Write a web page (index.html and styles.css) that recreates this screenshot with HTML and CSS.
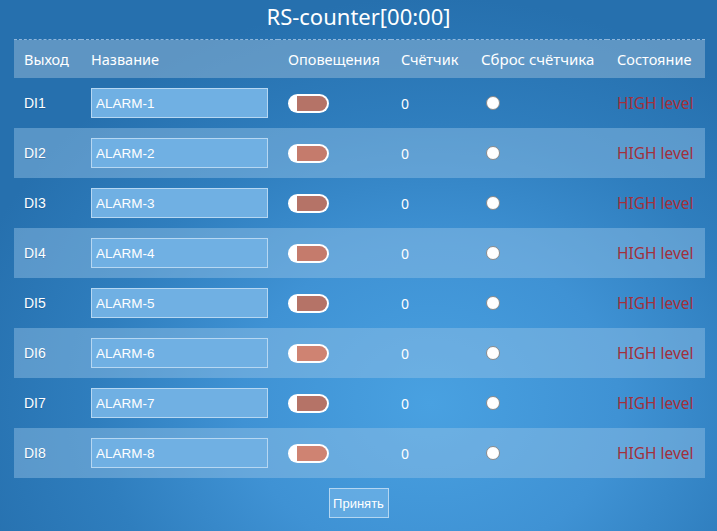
FILE: index.html
```html
<!DOCTYPE html>
<html lang="ru">
<head>
<meta charset="utf-8">
<title>RS-counter</title>
<link rel="stylesheet" href="styles.css">
</head>
<body>
<div class="page">
  <h1 class="title">RS-counter[00:00]</h1>
  <table class="grid">
    <colgroup>
      <col class="c1"><col class="c2"><col class="c3"><col class="c4"><col class="c5"><col class="c6">
    </colgroup>
    <thead>
      <tr class="head"><th>Выход</th><th>Название</th><th>Оповещения</th><th>Счётчик</th><th>Сброс счётчика</th><th>Состояние</th></tr>
    </thead>
    <tbody>
      <tr class="row"><td class="di">DI1</td><td><input class="name" value="ALARM-1"></td><td><span class="tog"><span class="fill"></span></span></td><td class="cnt">0</td><td><span class="radio"></span></td><td class="state">HIGH level</td></tr>
      <tr class="row"><td class="di">DI2</td><td><input class="name" value="ALARM-2"></td><td><span class="tog"><span class="fill"></span></span></td><td class="cnt">0</td><td><span class="radio"></span></td><td class="state">HIGH level</td></tr>
      <tr class="row"><td class="di">DI3</td><td><input class="name" value="ALARM-3"></td><td><span class="tog"><span class="fill"></span></span></td><td class="cnt">0</td><td><span class="radio"></span></td><td class="state">HIGH level</td></tr>
      <tr class="row"><td class="di">DI4</td><td><input class="name" value="ALARM-4"></td><td><span class="tog"><span class="fill"></span></span></td><td class="cnt">0</td><td><span class="radio"></span></td><td class="state">HIGH level</td></tr>
      <tr class="row"><td class="di">DI5</td><td><input class="name" value="ALARM-5"></td><td><span class="tog"><span class="fill"></span></span></td><td class="cnt">0</td><td><span class="radio"></span></td><td class="state">HIGH level</td></tr>
      <tr class="row"><td class="di">DI6</td><td><input class="name" value="ALARM-6"></td><td><span class="tog"><span class="fill"></span></span></td><td class="cnt">0</td><td><span class="radio"></span></td><td class="state">HIGH level</td></tr>
      <tr class="row"><td class="di">DI7</td><td><input class="name" value="ALARM-7"></td><td><span class="tog"><span class="fill"></span></span></td><td class="cnt">0</td><td><span class="radio"></span></td><td class="state">HIGH level</td></tr>
      <tr class="row"><td class="di">DI8</td><td><input class="name" value="ALARM-8"></td><td><span class="tog"><span class="fill"></span></span></td><td class="cnt">0</td><td><span class="radio"></span></td><td class="state">HIGH level</td></tr>
    </tbody>
  </table>
  <div class="actions"><button class="btn">Принять</button></div>
</div>
</body>
</html>
```

FILE: styles.css
```css
html, body {
  margin: 0;
  height: 100%;
}
body {
  background: radial-gradient(ellipse 75% 85% at 60% 76%, #49a1e1 0%, #3f92d4 35%, #2f7ebe 62%, #2670ae 90%);
  color: #fff;
  font-family: "Noto Sans", sans-serif;
}
.page {
  width: 717px;
  height: 531px;
  display: flex;
  flex-direction: column;
  align-items: center;
}
.title {
  margin: 0;
  height: 39px;
  line-height: 32px;
  font-size: 22px;
  font-weight: normal;
  text-align: center;
}
.grid {
  width: 691px;
  margin-left: 2px;
  border-collapse: collapse;
  table-layout: fixed;
}
.c1 { width: 67px; }
.c2 { width: 197px; }
.c3 { width: 113px; }
.c4 { width: 80px; }
.c5 { width: 136px; }
.c6 { width: 98px; }
.head {
  background: rgba(140, 180, 214, 0.55);
  border-top: 1px dashed rgba(170, 200, 230, 0.8);
}
.head th {
  height: 38px;
  padding: 0 0 0 10px;
  text-align: left;
  font-weight: normal;
  font-size: 14.5px;
  white-space: nowrap;
}
.head th:nth-child(5) {
  font-size: 15px;
}
.row td {
  height: 50px;
  padding: 0 0 0 10px;
  vertical-align: middle;
}
.row:nth-child(even) {
  background: rgba(150, 195, 230, 0.45);
}
.di {
  font-family: "Liberation Sans", Arial, sans-serif;
  font-size: 14px;
  text-shadow: 0 1px 0 rgba(0, 40, 80, 0.25);
}
.name {
  box-sizing: border-box;
  width: 177px;
  height: 30px;
  margin: 0;
  padding: 0 4px;
  border: 1px solid rgba(200, 225, 245, 0.8);
  background: #70b0e3;
  color: #fff;
  font-family: "Liberation Sans", Arial, sans-serif;
  font-size: 13.5px;
  display: block;
}
.tog {
  box-sizing: border-box;
  display: block;
  width: 41px;
  height: 19px;
  border-radius: 10px;
  background: #fff;
  padding: 2px 2px 2px 9px;
}
.fill {
  display: block;
  height: 100%;
  border-radius: 0 8px 8px 0;
  background: #b57367;
}
.row:nth-child(even) .fill { background: #c57b6c; }
.row:nth-child(n+6):nth-child(even) .fill { background: #cf8372; }
.cnt {
  font-size: 14px;
}
.radio {
  display: block;
  box-sizing: border-box;
  width: 14px;
  height: 14px;
  margin-left: 5px;
  border-radius: 50%;
  background: #fff;
  border: 1px solid #8a8a8a;
}
.state {
  color: #a3303c;
  font-size: 15.5px;
  white-space: nowrap;
}
.actions {
  padding-top: 10px;
}
.btn {
  box-sizing: border-box;
  width: 60px;
  height: 30px;
  padding: 0;
  border: 1px solid rgba(200, 225, 245, 0.8);
  background: rgba(140, 195, 240, 0.45);
  color: #fff;
  font-family: "Liberation Sans", Arial, sans-serif;
  font-size: 13px;
}
```
